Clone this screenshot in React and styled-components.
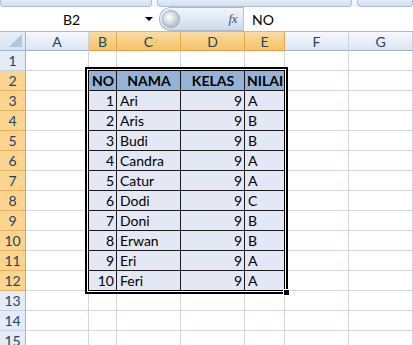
import React from 'react';
import styled, { createGlobalStyle } from 'styled-components';

const GlobalStyle = createGlobalStyle`
  html, body { margin: 0; padding: 0; background: #fff; }
  body {
    width: 413px;
    height: 345px;
    overflow: hidden;
    font-family: Lato, "Liberation Sans", sans-serif;
  }
`;

const COLS = [
  { k: 'A', w: 63 },
  { k: 'B', w: 28 },
  { k: 'C', w: 64 },
  { k: 'D', w: 64 },
  { k: 'E', w: 40 },
  { k: 'F', w: 64 },
  { k: 'G', w: 64 },
];
const SEL_COLS = ['B', 'C', 'D', 'E'];

const DATA = [
  [1, 'Ari', 9, 'A'],
  [2, 'Aris', 9, 'B'],
  [3, 'Budi', 9, 'B'],
  [4, 'Candra', 9, 'A'],
  [5, 'Catur', 9, 'A'],
  [6, 'Dodi', 9, 'C'],
  [7, 'Doni', 9, 'B'],
  [8, 'Erwan', 9, 'B'],
  [9, 'Eri', 9, 'A'],
  [10, 'Feri', 9, 'A'],
];
const HEAD = ['NO', 'NAMA', 'KELAS', 'NILAI'];
const ALIGN = ['right', 'left', 'right', 'left'];

const Page = styled.div`
  display: flex;
  flex-direction: column;
  width: 413px;
`;

const Ribbon = styled.div`
  display: flex;
  gap: 5px;
  height: 7px;
  background: #f4f7fb;
`;

const RibbonPiece = styled.div`
  flex: 0 0 ${(p) => p.$w}px;
  box-sizing: border-box;
  background: linear-gradient(#e3ecf7, #d2dfef);
  border: 1px solid #a9bfda;
  border-top: none;
  border-radius: 0 0 4px 4px;
`;

const FormulaBar = styled.div`
  display: flex;
  align-items: stretch;
  height: 24px;
  border-bottom: 1px solid #a9bdd6;
  background: #fff;
`;

const NameBox = styled.div`
  width: 143px;
  display: flex;
  align-items: center;
  justify-content: center;
  font-size: 14px;
  color: #000;
`;

const DropArrow = styled.div`
  width: 12px;
  display: flex;
  align-items: center;
  justify-content: center;
  &::after {
    content: '';
    border-left: 4px solid transparent;
    border-right: 4px solid transparent;
    border-top: 4px solid #000;
  }
`;

const FxPill = styled.div`
  margin-left: 4px;
  width: 84px;
  box-sizing: border-box;
  display: flex;
  align-items: center;
  background: linear-gradient(#f3f6fb, #dde7f4 55%, #cbd9ec);
  border: 1px solid #a7bad3;
  border-right: none;
  border-radius: 12px 0 0 12px;
  padding-left: 2px;
`;

const Knob = styled.div`
  width: 18px;
  height: 18px;
  border-radius: 50%;
  background: radial-gradient(circle at 40% 40%, #ffffff 0%, #e8ebef 25%, #b8c0ca 70%, #9aa4b1 100%);
  border: 1px solid #a3aebd;
  box-sizing: border-box;
`;

const Fx = styled.span`
  margin-left: auto;
  padding-right: 6px;
  font-family: "Liberation Serif", serif;
  font-style: italic;
  font-size: 13px;
  color: #4d5561;
  letter-spacing: -0.5px;
`;

const FormulaInput = styled.div`
  flex: 1;
  display: flex;
  align-items: center;
  padding-left: 8px;
  border-left: 1px solid #b6c6da;
  font-size: 14px;
  color: #000;
`;

const Sheet = styled.div`
  position: relative;
  display: grid;
  grid-template-columns: 26px ${COLS.map((c) => `${c.w}px`).join(' ')};
  grid-template-rows: 19px repeat(15, 20px);
`;

const Corner = styled.div`
  box-sizing: border-box;
  background: linear-gradient(#e8eef7, #d9e3f1);
  border-right: 1px solid #9eb6ce;
  border-bottom: 1px solid #9eb6ce;
  display: flex;
  align-items: flex-end;
  justify-content: flex-end;
  padding: 0 3px 3px 0;
`;

const ColHead = styled.div`
  box-sizing: border-box;
  display: flex;
  align-items: center;
  justify-content: center;
  font-size: 14px;
  color: #27415f;
  background: ${(p) =>
    p.$sel
      ? 'linear-gradient(#f9dca4, #f7cd80 55%, #f4c46c)'
      : 'linear-gradient(#f6f8fc, #e7eef7 55%, #dde6f2)'};
  border-right: 1px solid ${(p) => (p.$sel ? '#e3a752' : '#c5d3e5')};
  border-bottom: 1px solid ${(p) => (p.$sel ? '#f29c3c' : '#9eb6ce')};
`;

const RowHead = styled.div`
  box-sizing: border-box;
  display: flex;
  align-items: flex-end;
  justify-content: center;
  padding-bottom: 1px;
  font-size: 14px;
  color: #27415f;
  background: ${(p) => (p.$sel ? '#fbd590' : '#e4ecf7')};
  border-right: 1px solid ${(p) => (p.$sel ? '#f29c3c' : '#9eb6ce')};
  border-bottom: 1px solid ${(p) => (p.$sel ? '#eab25e' : '#c5d3e5')};
`;

const Cell = styled.div`
  box-sizing: border-box;
  display: flex;
  align-items: flex-end;
  justify-content: ${(p) =>
    p.$align === 'right' ? 'flex-end' : p.$align === 'center' ? 'center' : 'flex-start'};
  padding: 0 2px 1px 3px;
  font-size: 14px;
  line-height: 17px;
  font-weight: ${(p) => (p.$kind === 'head' ? 700 : 400)};
  color: #000;
  white-space: nowrap;
  overflow: hidden;
  background: ${(p) =>
    p.$kind === 'head' ? '#95b3d7' : p.$kind === 'body' ? '#e4e8f4' : '#fff'};
  border-right: 1px solid ${(p) => (p.$kind ? '#1a1a1a' : '#d0d7e5')};
  border-bottom: 1px solid ${(p) => (p.$kind ? '#1a1a1a' : '#d0d7e5')};
`;

const Selection = styled.div`
  position: absolute;
  left: 85px;
  top: 35px;
  width: 203px;
  height: 227px;
  box-sizing: border-box;
  border: 2px solid #000;
  box-shadow: inset 0 0 0 1px #fff, inset 0 0 0 2px #000;
  pointer-events: none;
`;

const FillHandle = styled.div`
  position: absolute;
  left: 283px;
  top: 257px;
  width: 5px;
  height: 5px;
  background: #000;
  border: 1px solid #fff;
`;

function CornerIcon() {
  return (
    <svg width="13" height="13" viewBox="0 0 13 13">
      <polygon points="13,0 13,13 0,13" fill="#b4c6dd" />
    </svg>
  );
}

function tableCell(colIdx, rowNum) {
  // colIdx: index into COLS (0 = A); rowNum 1-based
  const c = COLS[colIdx].k;
  const ti = SEL_COLS.indexOf(c);
  if (ti < 0 || rowNum < 2 || rowNum > 12) return { kind: null, text: '', align: 'left' };
  if (rowNum === 2) return { kind: 'head', text: HEAD[ti], align: 'center' };
  return { kind: 'body', text: String(DATA[rowNum - 3][ti]), align: ALIGN[ti] };
}

export default function App() {
  const rows = Array.from({ length: 15 }, (_, i) => i + 1);
  return (
    <Page>
      <GlobalStyle />
      <Ribbon>
        <RibbonPiece $w={152} />
        <RibbonPiece $w={195} />
        <RibbonPiece $w={56} />
      </Ribbon>
      <FormulaBar>
        <NameBox>B2</NameBox>
        <DropArrow />
        <FxPill>
          <Knob />
          <Fx>fx</Fx>
        </FxPill>
        <FormulaInput>NO</FormulaInput>
      </FormulaBar>
      <Sheet>
        <Corner>
          <CornerIcon />
        </Corner>
        {COLS.map((c) => (
          <ColHead key={c.k} $sel={SEL_COLS.includes(c.k)}>
            {c.k}
          </ColHead>
        ))}
        {rows.map((r) => (
          <React.Fragment key={r}>
            <RowHead $sel={r >= 2 && r <= 12}>{r}</RowHead>
            {COLS.map((c, ci) => {
              const t = tableCell(ci, r);
              return (
                <Cell key={c.k} $kind={t.kind} $align={t.align}>
                  {t.text}
                </Cell>
              );
            })}
          </React.Fragment>
        ))}
        <Selection />
        <FillHandle />
      </Sheet>
    </Page>
  );
}
